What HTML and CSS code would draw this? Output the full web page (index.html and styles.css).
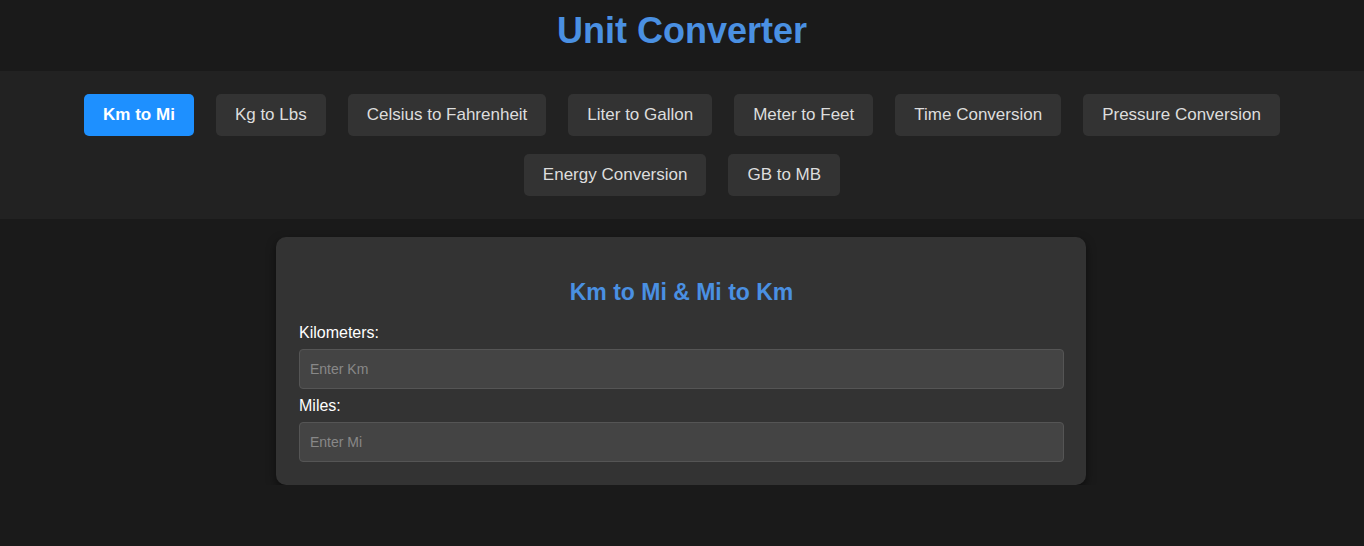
FILE: index.html
```html
<!DOCTYPE html>
<html lang="en">
<head>
<meta charset="UTF-8">
<title>Unit Converter</title>
<link rel="stylesheet" href="styles.css">
</head>
<body>
<header class="header">
  <h1 class="title">Unit Converter</h1>
</header>
<nav class="nav">
  <button class="nav-btn active">Km to Mi</button>
  <button class="nav-btn">Kg to Lbs</button>
  <button class="nav-btn">Celsius to Fahrenheit</button>
  <button class="nav-btn">Liter to Gallon</button>
  <button class="nav-btn">Meter to Feet</button>
  <button class="nav-btn">Time Conversion</button>
  <button class="nav-btn">Pressure Conversion</button>
  <button class="nav-btn">Energy Conversion</button>
  <button class="nav-btn">GB to MB</button>
</nav>
<main class="main">
  <section class="card">
    <h2 class="card-title">Km to Mi &amp; Mi to Km</h2>
    <label class="field-label" for="km">Kilometers:</label>
    <input class="field-input" id="km" type="number" placeholder="Enter Km">
    <label class="field-label" for="mi">Miles:</label>
    <input class="field-input last" id="mi" type="number" placeholder="Enter Mi">
  </section>
</main>
</body>
</html>
```

FILE: styles.css
```css
* { box-sizing: border-box; }
html, body {
  margin: 0;
  padding: 0;
  background: #1a1a1a;
  font-family: "Liberation Sans", Arial, sans-serif;
  color: #fff;
}
.header {
  padding: 10px 0 19px;
  text-align: center;
}
.title {
  margin: 0;
  font-size: 36px;
  font-weight: bold;
  color: #4a90e2;
  line-height: normal;
}
.nav {
  background: #222;
  padding: 23px 60px 23px;
  display: flex;
  flex-wrap: wrap;
  justify-content: center;
  column-gap: 22px;
  row-gap: 18px;
}
.nav-btn {
  font-family: "Liberation Sans", Arial, sans-serif;
  font-size: 17px;
  line-height: normal;
  height: 42px;
  padding: 0 19px;
  background: #333;
  color: #ddd;
  border: none;
  border-radius: 5px;
  cursor: pointer;
}
.nav-btn.active {
  background: #1e90ff;
  color: #fff;
  font-weight: bold;
}
.main {
  display: flex;
  justify-content: center;
  padding: 18px 2px 0 0;
}
.card {
  width: 810px;
  background: #333;
  border-radius: 10px;
  padding: 22px 22px 23px 23px;
  box-shadow: 0 4px 10px rgba(0,0,0,0.5);
}
.card-title {
  margin: 20px 0 18px;
  text-align: center;
  font-size: 23px;
  font-weight: bold;
  color: #4a90e2;
  line-height: normal;
}
.field-label {
  display: block;
  font-size: 16px;
  line-height: normal;
  margin-bottom: 7px;
  color: #fff;
}
.field-input {
  display: block;
  width: 100%;
  height: 40px;
  padding: 0 10px;
  margin-bottom: 8px;
  background: #444;
  border: 1px solid #555;
  border-radius: 4px;
  color: #fff;
  font-family: "Liberation Sans", Arial, sans-serif;
  font-size: 14px;
}
.field-input.last { margin-bottom: 0; }
.field-input::placeholder { color: #888; }
```
